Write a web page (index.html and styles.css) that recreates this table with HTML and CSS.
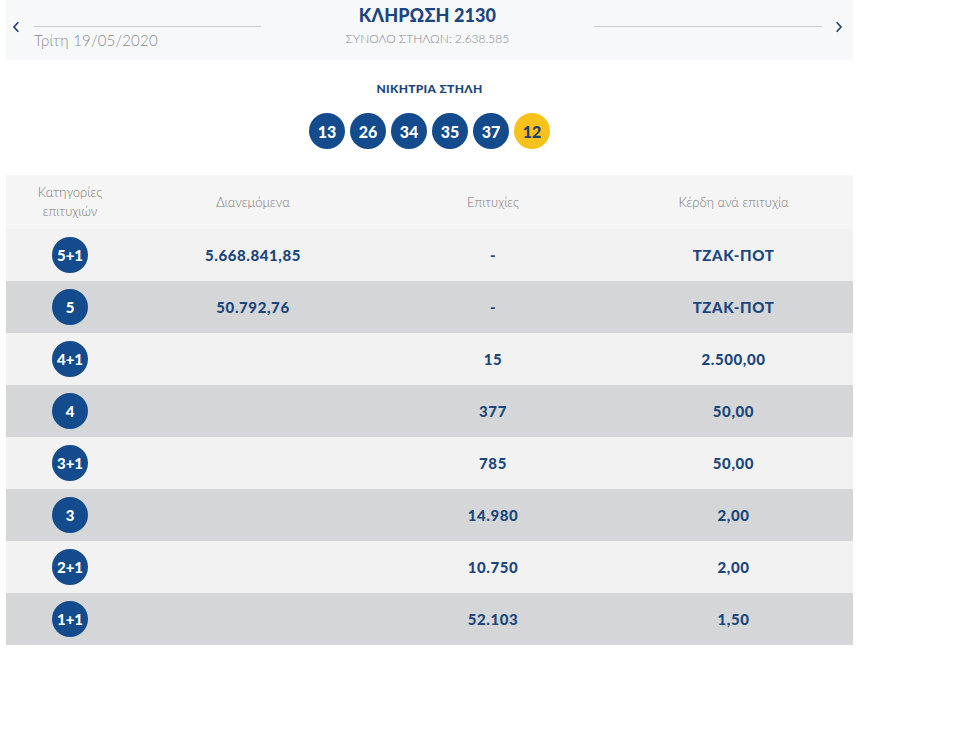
FILE: index.html
```html
<!DOCTYPE html>
<html lang="el">
<head>
<meta charset="utf-8">
<title>ΚΛΗΡΩΣΗ 2130</title>
<link rel="stylesheet" href="styles.css">
</head>
<body>
<div class="page">
  <div class="draw-header">
    <div class="nav nav-prev">
      <svg width="8" height="12" viewBox="0 0 8 12"><path d="M6.3 1.2 L2 6 L6.3 10.8" fill="none" stroke="#1d3f6e" stroke-width="1.6"/></svg>
    </div>
    <div class="side side-left">
      <div class="rule"></div>
      <div class="date">Τρίτη 19/05/2020</div>
    </div>
    <div class="center">
      <div class="title">ΚΛΗΡΩΣΗ 2130</div>
      <div class="subtitle">ΣΥΝΟΛΟ ΣΤΗΛΩΝ: 2.638.585</div>
    </div>
    <div class="side side-right">
      <div class="rule"></div>
    </div>
    <div class="nav nav-next">
      <svg width="8" height="12" viewBox="0 0 8 12"><path d="M1.7 1.2 L6 6 L1.7 10.8" fill="none" stroke="#1d3f6e" stroke-width="1.6"/></svg>
    </div>
  </div>

  <div class="winning">
    <div class="winning-title">ΝΙΚΗΤΡΙΑ ΣΤΗΛΗ</div>
    <div class="balls">
      <span class="ball">13</span>
      <span class="ball">26</span>
      <span class="ball">34</span>
      <span class="ball">35</span>
      <span class="ball">37</span>
      <span class="ball ball-joker">12</span>
    </div>
  </div>

  <div class="results">
    <div class="row row-head">
      <div class="cell">Κατηγορίες<br>επιτυχιών</div>
      <div class="cell">Διανεμόμενα</div>
      <div class="cell">Επιτυχίες</div>
      <div class="cell">Κέρδη ανά επιτυχία</div>
    </div>
    <div class="row row-light">
      <div class="cell"><span class="cat">5+1</span></div>
      <div class="cell val">5.668.841,85</div>
      <div class="cell val">-</div>
      <div class="cell val">ΤΖΑΚ-ΠΟΤ</div>
    </div>
    <div class="row row-dark">
      <div class="cell"><span class="cat">5</span></div>
      <div class="cell val">50.792,76</div>
      <div class="cell val">-</div>
      <div class="cell val">ΤΖΑΚ-ΠΟΤ</div>
    </div>
    <div class="row row-light">
      <div class="cell"><span class="cat">4+1</span></div>
      <div class="cell val"></div>
      <div class="cell val">15</div>
      <div class="cell val">2.500,00</div>
    </div>
    <div class="row row-dark">
      <div class="cell"><span class="cat">4</span></div>
      <div class="cell val"></div>
      <div class="cell val">377</div>
      <div class="cell val">50,00</div>
    </div>
    <div class="row row-light">
      <div class="cell"><span class="cat">3+1</span></div>
      <div class="cell val"></div>
      <div class="cell val">785</div>
      <div class="cell val">50,00</div>
    </div>
    <div class="row row-dark">
      <div class="cell"><span class="cat">3</span></div>
      <div class="cell val"></div>
      <div class="cell val">14.980</div>
      <div class="cell val">2,00</div>
    </div>
    <div class="row row-light">
      <div class="cell"><span class="cat">2+1</span></div>
      <div class="cell val"></div>
      <div class="cell val">10.750</div>
      <div class="cell val">2,00</div>
    </div>
    <div class="row row-dark">
      <div class="cell"><span class="cat">1+1</span></div>
      <div class="cell val"></div>
      <div class="cell val">52.103</div>
      <div class="cell val">1,50</div>
    </div>
  </div>
</div>
</body>
</html>
```

FILE: styles.css
```css
html, body {
  margin: 0;
  padding: 0;
  background: #ffffff;
}

body {
  font-family: Lato, "Noto Sans", "DejaVu Sans", sans-serif;
  color: #1b467c;
}

.page {
  width: 847px;
  margin-left: 6px;
}

/* header */
.draw-header {
  height: 60px;
  background: #f6f8fa;
  display: grid;
  grid-template-columns: 28px 227px 333px 228px 31px;
}

.nav {
  padding-top: 21px;
  display: flex;
}

.nav-prev {
  padding-left: 6px;
}

.nav-next {
  padding-left: 13px;
}

.side {
  padding-top: 26px;
}

.rule {
  height: 1px;
  background: #c6cacf;
}

.date {
  margin-top: 4px;
  font-size: 15px;
  line-height: 18px;
  font-weight: 300;
  color: #8a8a8a;
  letter-spacing: 0.2px;
}

.center {
  text-align: center;
}

.title {
  padding-top: 4px;
  font-size: 18px;
  line-height: 22px;
  font-weight: 900;
  color: #1b467c;
  letter-spacing: 0.1px;
}

.subtitle {
  margin-top: 5px;
  font-size: 12px;
  line-height: 16px;
  font-weight: 300;
  color: #858585;
}

/* winning column */
.winning {
  margin-top: 19px;
  text-align: center;
}

.winning-title {
  font-size: 12px;
  line-height: 20px;
  font-weight: 900;
  color: #1b467c;
  letter-spacing: 0.3px;
}

.balls {
  margin-top: 14px;
  display: flex;
  justify-content: center;
  gap: 5px;
}

.ball {
  width: 36px;
  height: 36px;
  border-radius: 50%;
  background: #134b8c;
  color: #ffffff;
  font-size: 16px;
  font-weight: 900;
  display: flex;
  align-items: center;
  justify-content: center;
}

.ball-joker {
  background: #f8c21d;
  color: #1d3f6e;
}

/* results table */
.results {
  margin-top: 26px;
}

.row {
  display: grid;
  grid-template-columns: 128px 238px 242px 239px;
  height: 52px;
}

.cell {
  display: flex;
  align-items: center;
  justify-content: center;
  text-align: center;
}

.row-head {
  height: 54px;
  background: #f5f5f5;
}

.row-head .cell {
  font-size: 13px;
  line-height: 19px;
  font-weight: 300;
  color: #777777;
}

.row-light {
  background: #f2f2f3;
}

.row-dark {
  background: #d5d6d8;
}

.val {
  font-size: 15px;
  font-weight: 900;
  color: #1b467c;
  letter-spacing: 0.6px;
}

.cat {
  width: 36px;
  height: 36px;
  border-radius: 50%;
  background: #134b8c;
  color: #ffffff;
  font-size: 15px;
  font-weight: 900;
  display: flex;
  align-items: center;
  justify-content: center;
}
```
